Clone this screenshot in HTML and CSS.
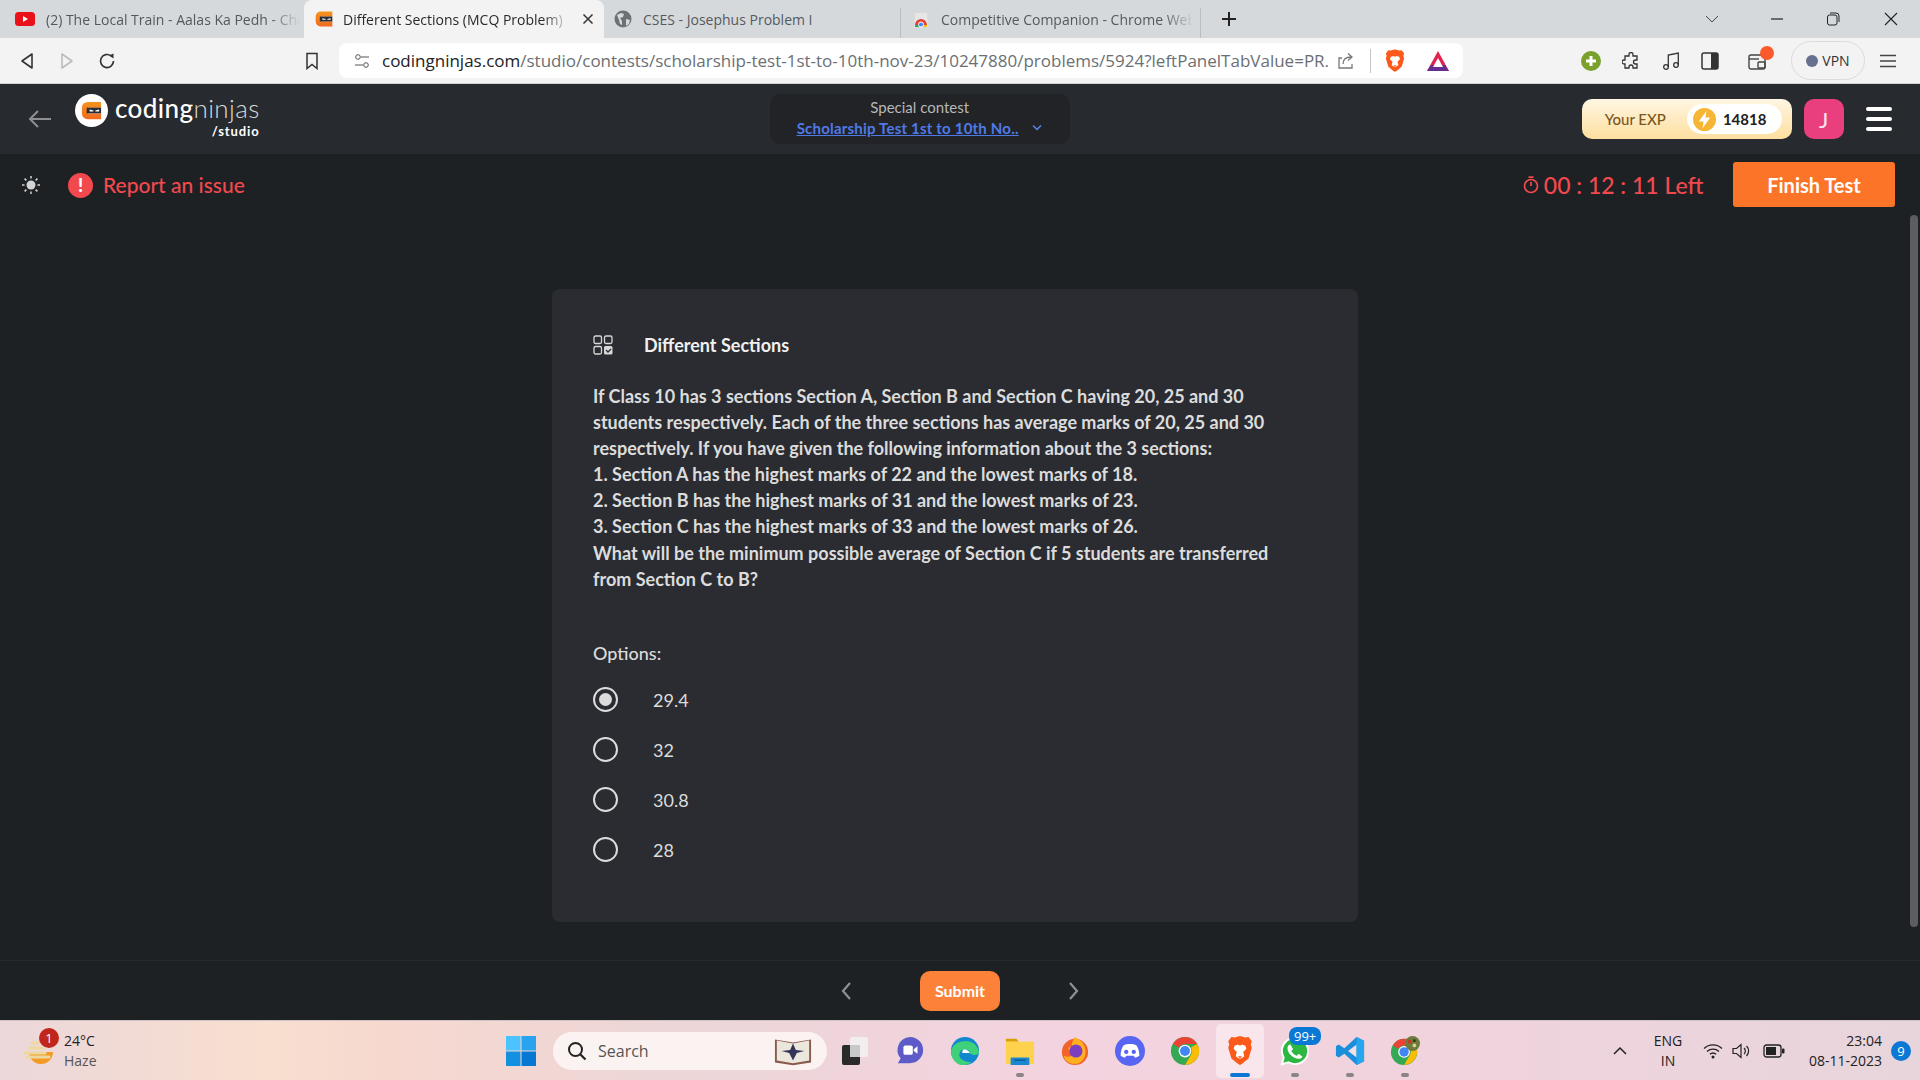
FILE: index.html
```html
<!DOCTYPE html>
<html lang="en">
<head>
    <meta charset="UTF-8">
    <title>Different Sections (MCQ Problem)</title>
    <link rel="stylesheet" href="styles.css">
</head>
<body>
    <svg class="sprite" width="0" height="0">
        <defs>
            <linearGradient id="cnOrange" x1="0" y1="0" x2="0" y2="1">
                <stop offset="0" stop-color="#f7941d"/>
                <stop offset="1" stop-color="#ef6a1f"/>
            </linearGradient>
            <symbol id="cnLogo" viewBox="0 0 24 24">
                <path d="M8 3h14v6H9a1.5 1.5 0 0 0-1.500 1.500v3A1.500 1.500 0 0 0 9 15h13v6H8a6 6 0 0 1-6-6V9a6 6 0 0 1 6-6z" fill="url(#cnOrange)"/>
                <rect x="7" y="9" width="15" height="6" fill="#2b2d33"/>
                <path d="M10 11l4 1v1h-4zM20 11l-4 1v1h4z" fill="#fff"/>
            </symbol>
            <symbol id="brave" viewBox="0 0 24 28">
                <path d="M12 0l5 1.500 3-.5 3 4-1 3 1 3-3 10-6 5-2 1-2-1-6-5-3-10 1-3-1-3 3-4 3 .5z" fill="#fb5a1b"/>
                <path d="M7 9l3-1 2 1 2-1 3 1 1 3-3 3 1 4-3 2h-2l-3-2 1-4-3-3z" fill="#fff"/>
                <path d="M10 19h4l-2 2z" fill="#fb5a1b"/>
            </symbol>
        </defs>
    </svg>

    <!-- browser tabs -->
    <div class="tab-strip">
        <div class="tab tab-first">
            <svg class="tab-icon" viewBox="0 0 20 14"><rect width="20" height="14" rx="3.500" fill="#e9101a"/><path d="M8 4l5 3-5 3z" fill="#fff"/></svg>
            <span class="tab-title">(2) The Local Train - Aalas Ka Pedh - Chaa</span>
        </div>
        <div class="tab tab-active">
            <svg class="tab-icon" viewBox="0 0 24 24"><use href="#cnLogo"/></svg>
            <span class="tab-title">Different Sections (MCQ Problem)</span>
            <svg class="tab-close" viewBox="0 0 12 12"><path d="M1.500 1.500l9 9M10.500 1.500l-9 9" stroke="#333" stroke-width="1.500" fill="none"/></svg>
        </div>
        <div class="tab tab-third">
            <svg class="tab-icon" viewBox="0 0 18 18"><circle cx="9" cy="9" r="8.500" fill="#6c7176"/><path d="M3 5l4-2 3 1-1 3-3 1 2 3v4l-2-1-1-4zM12 9l4 1-1 4-3 2z" fill="#d5d9dc"/></svg>
            <span class="tab-title">CSES - Josephus Problem I</span>
        </div>
        <div class="tab tab-fourth">
            <svg class="tab-icon" viewBox="0 0 18 18"><path d="M3 3h12l1 14H2z" fill="#e6e6e6"/><path d="M3 15a6 6 0 0 1 12 0z" fill="#e34133"/><path d="M3 15h6v2H3z" fill="#34a853"/><path d="M9 15h6v2H9z" fill="#fbbc05"/><circle cx="9" cy="14.500" r="2.500" fill="#4285f4" stroke="#fff"/></svg>
            <span class="tab-title">Competitive Companion - Chrome Web Store</span>
        </div>
        <svg class="new-tab" viewBox="0 0 16 16"><path d="M8 1v14M1 8h14" stroke="#222" stroke-width="2" fill="none"/></svg>
        <div class="window-controls">
            <svg viewBox="0 0 14 14" class="win-chevron"><path d="M1 4l6 6 6-6" stroke="#444" fill="none"/></svg>
            <svg viewBox="0 0 14 14" class="win-min"><path d="M1 7h12" stroke="#222" stroke-width="1.200" fill="none"/></svg>
            <svg viewBox="0 0 14 14" class="win-max"><rect x="1.500" y="3" width="9.500" height="10" rx="2" stroke="#222" fill="none"/><path d="M4 1h6a3 3 0 0 1 3 3v6" stroke="#222" fill="none"/></svg>
            <svg viewBox="0 0 14 14" class="win-x"><path d="M1 1l12 12M13 1L1 13" stroke="#222" stroke-width="1.100" fill="none"/></svg>
        </div>
    </div>

    <!-- browser toolbar -->
    <div class="toolbar">
        <svg class="nav-back" viewBox="0 0 14 18"><path d="M12 2v14L2 9z" stroke="#333" stroke-width="1.600" stroke-linejoin="round" fill="none"/></svg>
        <svg class="nav-forward" viewBox="0 0 14 18"><path d="M2 2v14L12 9z" stroke="#bbb" stroke-width="1.600" stroke-linejoin="round" fill="none"/></svg>
        <svg class="nav-reload" viewBox="0 0 18 18"><path d="M15.500 9A6.500 6.500 0 1 1 13 3.900" stroke="#333" stroke-width="1.700" fill="none"/><path d="M11 3.500l4.500-2v5z" fill="#333"/></svg>
        <svg class="nav-bookmark" viewBox="0 0 14 18"><path d="M2 1.500h10v15l-5-4-5 4z" stroke="#333" stroke-width="1.500" fill="none"/></svg>
        <div class="address-bar">
            <svg class="tune" viewBox="0 0 16 16"><circle cx="4" cy="4" r="2.300" stroke="#555" fill="none"/><path d="M7 4h8M1 12h8" stroke="#555" fill="none"/><circle cx="12" cy="12" r="2.300" stroke="#555" fill="none"/></svg>
            <span class="url"><span class="url-host">codingninjas.com</span>/studio/contests/scholarship-test-1st-to-10th-nov-23/10247880/problems/5924?leftPanelTabValue=PR...</span>
            <svg class="share" viewBox="0 0 18 18"><path d="M5 6H2v10h13v-4" stroke="#777" stroke-width="1.300" fill="none"/><path d="M6 12c0-5 3-7 8-7M11 1.500L15 5l-4 3.500" stroke="#777" stroke-width="1.300" fill="none"/></svg>
            <span class="addr-sep"></span>
            <svg class="addr-brave" viewBox="0 0 24 28"><use href="#brave"/></svg>
            <svg class="addr-bat" viewBox="0 0 24 22"><path d="M12 1l11 20H1z" fill="#e0234e"/><path d="M1 21h22l-4-6H5z" fill="#662d91"/><path d="M12 8l5 9H7z" fill="#fff"/></svg>
        </div>
        <svg class="ext-plus" viewBox="0 0 20 20"><circle cx="10" cy="10" r="10" fill="#7aa12b"/><path d="M10 5v10M5 10h10" stroke="#fff" stroke-width="3"/></svg>
        <svg class="ext-puzzle" viewBox="0 0 18 18"><path d="M7 2.500a2 2 0 0 1 4 0V4h4v4h-1.500a2 2 0 0 0 0 4H15v4h-4v-1a2 2 0 0 0-4 0v1H3v-4H2a2 2 0 0 1 0-4h1V4h4z" stroke="#333" stroke-width="1.300" fill="none"/></svg>
        <svg class="ext-music" viewBox="0 0 18 18"><circle cx="4" cy="15" r="2.300" stroke="#333" stroke-width="1.300" fill="none"/><circle cx="14" cy="13" r="2.300" stroke="#333" stroke-width="1.300" fill="none"/><path d="M6.300 15V3l10-2v12" stroke="#333" stroke-width="1.300" fill="none"/></svg>
        <svg class="ext-side" viewBox="0 0 18 18"><rect x="1" y="1" width="16" height="16" rx="2" stroke="#333" stroke-width="1.500" fill="none"/><rect x="10" y="1" width="7" height="16" fill="#333"/></svg>
        <div class="ext-wallet">
            <svg viewBox="0 0 20 18"><rect x="1" y="3" width="16" height="14" rx="2" stroke="#444" stroke-width="1.400" fill="none"/><path d="M1 7h10" stroke="#444" stroke-width="1.400"/><rect x="10" y="10" width="7" height="6" rx="1" stroke="#444" stroke-width="1.400" fill="none"/></svg>
            <span class="wallet-dot"></span>
        </div>
        <div class="vpn-pill"><span class="vpn-dot"></span>VPN</div>
        <svg class="browser-menu" viewBox="0 0 18 14"><path d="M1 1.500h16M1 7h16M1 12.500h16" stroke="#444" stroke-width="1.600"/></svg>
    </div>

    <!-- site header -->
    <header class="app-header">
        <svg class="back-arrow" viewBox="0 0 24 20"><path d="M23 10H2M10 2l-8 8 8 8" stroke="#8d8f92" stroke-width="2" fill="none"/></svg>
        <div class="brand">
            <div class="brand-mark"><svg viewBox="0 0 24 24"><use href="#cnLogo"/></svg></div>
            <div class="brand-text">
                <div class="brand-name"><span class="brand-bold">coding</span>ninjas</div>
                <div class="brand-sub">/studio</div>
            </div>
        </div>
        <div class="contest-box">
            <div class="contest-label">Special contest</div>
            <div class="contest-link"><a>Scholarship Test 1st to 10th No..</a>
                <svg viewBox="0 0 12 8"><path d="M2 1.500l4 4 4-4" stroke="#5d86ee" stroke-width="1.500" fill="none"/></svg>
            </div>
        </div>
        <div class="exp-pill">
            <span class="exp-label">Your EXP</span>
            <div class="exp-value">
                <svg viewBox="0 0 24 24"><circle cx="12" cy="12" r="12" fill="#f7b535"/><path d="M14 3L6 14h5l-1 7 8-11h-5z" fill="#fff"/></svg>
                <span>14818</span>
            </div>
        </div>
        <div class="avatar">J</div>
        <div class="hamburger"><span></span><span></span><span></span></div>
    </header>

    <div class="sub-header">
        <svg class="sun" viewBox="0 0 20 20"><circle cx="10" cy="10" r="4.500" fill="#d4d4d4"/><path d="M10 1v2.500M10 16.500V19M1 10h2.500M16.500 10H19M3.600 3.600l1.800 1.800M14.600 14.600l1.800 1.800M3.600 16.400l1.800-1.800M14.600 5.400l1.800-1.800" stroke="#d4d4d4" stroke-width="1.500"/></svg>
        <div class="report-icon">!</div>
        <span class="report-text">Report an issue</span>
        <svg class="timer-icon" viewBox="0 0 16 18"><circle cx="8" cy="10" r="6.500" stroke="#f2494e" stroke-width="1.700" fill="none"/><path d="M8 10V6M5.500 1.200h5" stroke="#f2494e" stroke-width="1.700"/></svg>
        <span class="timer-text">00 : 12 : 11 Left</span>
        <button class="finish-btn">Finish Test</button>
    </div>

    <!-- question -->
    <main class="main">
        <div class="question-card">
            <div class="question-head">
                <svg viewBox="0 0 20 20"><rect x="1" y="1" width="7.500" height="7.500" rx="1.500" stroke="#d8d8d8" stroke-width="1.300" fill="none"/><rect x="11.500" y="1" width="7.500" height="7.500" rx="1.500" stroke="#d8d8d8" stroke-width="1.300" fill="none"/><rect x="1" y="11.500" width="7.500" height="7.500" rx="1.500" stroke="#d8d8d8" stroke-width="1.300" fill="none"/><rect x="11" y="11" width="8.500" height="8.500" rx="1.500" fill="#d8d8d8"/><path d="M13 15l2 2 3-3" stroke="#2a2c31" stroke-width="1.300" fill="none"/></svg>
                <h2>Different Sections</h2>
            </div>
            <div class="question-text">
                <p>If Class 10 has 3 sections Section A, Section B and Section C having 20, 25 and 30</p>
                <p>students respectively. Each of the three sections has average marks of 20, 25 and 30</p>
                <p>respectively. If you have given the following information about the 3 sections:</p>
                <p>1. Section A has the highest marks of 22 and the lowest marks of 18.</p>
                <p>2. Section B has the highest marks of 31 and the lowest marks of 23.</p>
                <p>3. Section C has the highest marks of 33 and the lowest marks of 26.</p>
                <p>What will be the minimum possible average of Section C if 5 students are transferred</p>
                <p>from Section C to B?</p>
            </div>
            <div class="options-label">Options:</div>
            <div class="option"><span class="radio radio-on"></span><span>29.4</span></div>
            <div class="option"><span class="radio"></span><span>32</span></div>
            <div class="option"><span class="radio"></span><span>30.8</span></div>
            <div class="option"><span class="radio"></span><span>28</span></div>
        </div>
        <div class="scrollbar"></div>
    </main>

    <div class="submit-bar">
        <svg class="pager" viewBox="0 0 12 20"><path d="M10 2L3 10l7 8" stroke="#8a9198" stroke-width="2.200" fill="none"/></svg>
        <button class="submit-btn">Submit</button>
        <svg class="pager" viewBox="0 0 12 20"><path d="M2 2l7 8-7 8" stroke="#8a9198" stroke-width="2.200" fill="none"/></svg>
    </div>

    <!-- windows taskbar -->
    <footer class="taskbar">
        <div class="weather">
            <svg class="weather-icon" viewBox="0 0 30 30"><path d="M5 16h24a12 12 0 0 1-24 0z" fill="#f59a23"/><path d="M8 7h6M5 12h14M1 17h20M3 21h22" stroke="#ecd9a0" stroke-width="3" stroke-linecap="round"/></svg>
            <span class="weather-badge">1</span>
            <div class="weather-text"><div>24°C</div><div class="weather-sub">Haze</div></div>
        </div>
        <div class="task-center">
            <svg class="start" viewBox="0 0 30 30"><rect width="14.500" height="14.500" fill="#4cc2ff"/><rect x="15.500" width="14.500" height="14.500" fill="#29a3ee"/><rect y="15.500" width="14.500" height="14.500" fill="#1490e0"/><rect x="15.500" y="15.500" width="14.500" height="14.500" fill="#0678d4"/></svg>
            <div class="search-box">
                <svg viewBox="0 0 20 20"><circle cx="8.500" cy="8.500" r="6.500" stroke="#222" stroke-width="2" fill="none"/><path d="M13.500 13.500l5 5" stroke="#222" stroke-width="2.200"/></svg>
                <span>Search</span>
                <svg class="search-art" viewBox="0 0 40 30"><path d="M1 3l19 3 19-3v24l-19 3-19-3z" fill="#8a5b4c"/><path d="M3 4l17 3 17-3v21l-17 3-17-3z" fill="#ece7dc"/><path d="M20 7l3 7 9 1-8 2-4 8-4-8-8-2 9-1z" fill="#33335a"/></svg>
            </div>
            <div class="task-icon">
                <svg viewBox="0 0 26 30"><rect x="8" y="1" width="18" height="20" rx="2" fill="#f3f3f3" opacity=".8"/><rect y="9" width="18" height="20" rx="2" fill="#2a2a2a"/><rect x="8" y="9" width="10" height="12" fill="#c8c8c8"/></svg>
            </div>
            <div class="task-icon">
                <svg viewBox="0 0 30 32"><path d="M15 1a14 14 0 0 1 0 28H2l3-5a14 14 0 0 1 10-23z" fill="#5d5bc7"/><rect x="8" y="10" width="10" height="10" rx="2" fill="#fff"/><path d="M19 14l4-3v8l-4-3z" fill="#fff"/></svg>
            </div>
            <div class="task-icon">
                <svg viewBox="0 0 32 32"><circle cx="16" cy="16" r="15" fill="#1187d0"/><path d="M1 16C3 4 27-1 31 17c0 4-8 4-10 1 0-5-10-6-11 1-1 6 6 9 13 9-4 3-10 4-14 2C4 27 1 22 1 16z" fill="#3fd07a"/><path d="M10 19c0-7 9-6 11-1 2 3 10 3 10-1" fill="none"/><path d="M15 14c3 0 5 2 6 4h-8c0-2 1-4 2-4z" fill="#fff"/></svg>
            </div>
            <div class="task-icon task-open">
                <svg viewBox="0 0 32 30"><path d="M1 2h11l3 3H1z" fill="#d9a100"/><rect x="1" y="5" width="30" height="24" fill="#ffd24d"/><rect x="6" y="22" width="20" height="8" rx="1" fill="#1a87d0"/><rect x="10" y="24" width="12" height="1.500" fill="#0e5a96"/></svg>
            </div>
            <div class="task-icon">
                <svg viewBox="0 0 30 32"><circle cx="15" cy="17" r="14" fill="#f2632c"/><path d="M15 1c4 3 8 4 9 8 4 6 3 16-5 20-6 2-14 0-16-8 5 3 10 0 12-4-2-2-6-1-7-3 0-2 2-3 4-3-1-3 1-7 3-10z" fill="#ffb01f"/><circle cx="16" cy="16" r="7" fill="#7b3fc0"/></svg>
            </div>
            <div class="task-icon">
                <svg viewBox="0 0 32 32"><circle cx="16" cy="16" r="16" fill="#5865f2"/><path d="M9 10c4-2 10-2 14 0 2 3 3 7 3 11-2 1-3 2-5 2l-1-2H12l-1 2c-2 0-3-1-5-2 0-4 1-8 3-11z" fill="#fff"/><circle cx="12" cy="17" r="2.300" fill="#5865f2"/><circle cx="20" cy="17" r="2.300" fill="#5865f2"/></svg>
            </div>
            <div class="task-icon">
                <svg viewBox="0 0 32 32"><circle cx="16" cy="16" r="15" fill="#34a853"/><path d="M16 1a15 15 0 0 1 13 7.500H16a7.500 7.500 0 0 0-6.500 3.800L3 8.500A15 15 0 0 1 16 1z" fill="#ea4335"/><path d="M29 8.500A15 15 0 0 1 16 31l6.500-11.300A7.500 7.500 0 0 0 22.500 12z" fill="#fbbc05"/><circle cx="16" cy="16" r="6.800" fill="#fff"/><circle cx="16" cy="16" r="5.300" fill="#4285f4"/></svg>
            </div>
            <div class="task-icon task-active">
                <svg viewBox="0 0 24 28"><use href="#brave"/></svg>
            </div>
            <div class="task-icon task-open">
                <svg viewBox="0 0 32 32"><path d="M16 2a14 14 0 0 1 0 28c-3 0-5-1-7-2l-7 2 2-7C3 21 2 18 2 16A14 14 0 0 1 16 2z" fill="#2bb741" stroke="#fff" stroke-width="2"/><path d="M11 9l3 5-2 2c2 3 3 4 6 5l2-2 4 3c-2 3-5 3-9 1-5-3-7-7-7-10 0-2 1-4 3-4z" fill="#fff"/></svg>
                <span class="wa-badge">99+</span>
            </div>
            <div class="task-icon task-open">
                <svg viewBox="0 0 32 32"><path d="M23 1l8 4v22l-8 4-13-12-6 4-3-2V11l3-2 6 4z" fill="#1b8fdc"/><path d="M23 9l-9 7 9 7z" fill="#f5dfe3"/><path d="M23 1l8 4v22l-8 4z" fill="#25a6ee"/></svg>
            </div>
            <div class="task-icon task-open">
                <svg viewBox="0 0 32 32"><circle cx="15" cy="17" r="14" fill="#34a853"/><path d="M15 3a14 14 0 0 1 12 7H15a7 7 0 0 0-6 3.500L3 10A14 14 0 0 1 15 3z" fill="#ea4335"/><path d="M27 10a14 14 0 0 1-12 21l6-10.500A7 7 0 0 0 21 13z" fill="#fbbc05"/><circle cx="15" cy="17" r="6.300" fill="#fff"/><circle cx="15" cy="17" r="5" fill="#4285f4"/><circle cx="24" cy="8" r="8" fill="#6c7a3e"/><circle cx="21" cy="6" r="2" fill="#c33b1f"/><circle cx="26" cy="10" r="2" fill="#d9d27a"/><circle cx="26" cy="5" r="1.500" fill="#2d3318"/></svg>
            </div>
        </div>
        <div class="tray">
            <svg class="tray-chevron" viewBox="0 0 14 9"><path d="M1 8l6-6 6 6" stroke="#222" stroke-width="1.500" fill="none"/></svg>
            <div class="tray-lang"><div>ENG</div><div>IN</div></div>
            <svg class="tray-wifi" viewBox="0 0 20 16"><path d="M1 5.500a13 13 0 0 1 18 0M4 8.500a9 9 0 0 1 12 0M6.800 11.300a5 5 0 0 1 6.400 0" stroke="#222" stroke-width="1.300" fill="none"/><circle cx="10" cy="14" r="1.500" fill="#222"/></svg>
            <svg class="tray-vol" viewBox="0 0 20 16"><path d="M1 5.500h3.500L9 1.500v13l-4.500-4H1z" stroke="#222" stroke-width="1.200" fill="none"/><path d="M12 5a4 4 0 0 1 0 6M14.500 3a7 7 0 0 1 0 10" stroke="#222" stroke-width="1.200" fill="none"/></svg>
            <svg class="tray-batt" viewBox="0 0 22 14"><rect x="1" y="1" width="17" height="12" rx="2.500" stroke="#222" stroke-width="1.300" fill="none"/><rect x="3" y="3" width="10" height="8" fill="#222"/><rect x="19" y="4.500" width="2.500" height="5" rx="1" fill="#222"/></svg>
            <div class="tray-clock"><div>23:04</div><div>08-11-2023</div></div>
            <span class="tray-badge">9</span>
        </div>
    </footer>
</body>
</html>
```
FILE: styles.css
```css
* {
    box-sizing: border-box;
}
html, body {
    margin: 0;
    height: 1080px;
    overflow: hidden;
}
body {
    font-family: "Open Sans", "Noto Sans", sans-serif;
    background-color: #1e2124;
    display: flex;
    flex-direction: column;
}
svg {
    display: block;
    flex-shrink: 0;
}
.sprite {
    position: absolute;
}

/* tabs */
.tab-strip {
    height: 38px;
    display: flex;
    align-items: stretch;
    background-color: #d5d9dc;
    font-size: 14px;
    color: #55595d;
}
.tab {
    display: flex;
    align-items: center;
    overflow: hidden;
    white-space: nowrap;
}
.tab-title {
    overflow: hidden;
    flex: 1;
    -webkit-mask-image: linear-gradient(to right, #000 88%, transparent);
    mask-image: linear-gradient(to right, #000 88%, transparent);
}
.tab-icon {
    width: 20px;
    height: 20px;
    margin-right: 11px;
}
.tab-first {
    width: 304px;
    padding: 0 4px 0 15px;
}
.tab-active {
    width: 300px;
    background-color: #f3f3f3;
    color: #2a2a2a;
    border-radius: 8px 8px 0 0;
    padding: 0 10px;
}
.tab-active .tab-icon {
    margin-right: 9px;
}
.tab-close {
    width: 12px;
    height: 12px;
    margin-left: 12px;
}
.tab-third {
    width: 297px;
    padding: 0 10px 0 10px;
    border-right: 1px solid #b9bdc0;
    margin-top: 8px;
    padding-bottom: 8px;
}
.tab-fourth {
    width: 300px;
    padding: 0 6px 0 11px;
    border-right: 1px solid #b9bdc0;
    margin-top: 8px;
    padding-bottom: 8px;
}
.tab-third .tab-title {
    -webkit-mask-image: none;
    mask-image: none;
}
.tab-third .tab-icon {
    width: 18px;
    height: 18px;
}
.tab-fourth .tab-icon {
    width: 18px;
    height: 18px;
}
.new-tab {
    width: 16px;
    height: 16px;
    margin: 11px 0 0 20px;
}
.window-controls {
    margin-left: auto;
    display: flex;
    align-items: center;
    padding-right: 22px;
}
.window-controls svg {
    width: 14px;
    height: 14px;
}
.win-chevron {
    margin-right: 51px;
}
.win-min {
    margin-right: 42px;
}
.win-max {
    margin-right: 44px;
}

/* toolbar */
.toolbar {
    height: 46px;
    display: flex;
    align-items: center;
    background-color: #f3f3f3;
    border-bottom: 1px solid #d0d2d4;
    padding-left: 20px;
}
.nav-back, .nav-forward {
    width: 14px;
    height: 18px;
}
.nav-forward {
    margin-left: 26px;
}
.nav-reload {
    width: 18px;
    height: 18px;
    margin-left: 24px;
}
.nav-bookmark {
    width: 14px;
    height: 18px;
    margin-left: 189px;
}
.address-bar {
    width: 1124px;
    height: 35px;
    margin-left: 20px;
    background: white;
    border-radius: 8px;
    display: flex;
    align-items: center;
    padding-left: 15px;
}
.tune {
    width: 16px;
    height: 16px;
}
.url {
    margin-left: 12px;
    width: 948px;
    font-size: 17px;
    color: #6b6f74;
    white-space: nowrap;
    overflow: hidden;
}
.url-host {
    color: #222;
}
.share {
    width: 18px;
    height: 18px;
    margin-left: 7px;
}
.addr-sep {
    width: 1px;
    height: 24px;
    background-color: #c5c5c5;
    margin-left: 15px;
}
.addr-brave {
    width: 20px;
    height: 24px;
    margin-left: 14px;
}
.addr-bat {
    width: 24px;
    height: 22px;
    margin-left: 21px;
}
.ext-plus {
    width: 20px;
    height: 20px;
    margin-left: 118px;
}
.ext-puzzle {
    width: 18px;
    height: 18px;
    margin-left: 21px;
}
.ext-music {
    width: 18px;
    height: 18px;
    margin-left: 22px;
}
.ext-side {
    width: 18px;
    height: 18px;
    margin-left: 21px;
}
.ext-wallet {
    position: relative;
    margin-left: 29px;
}
.ext-wallet svg {
    width: 20px;
    height: 18px;
}
.wallet-dot {
    position: absolute;
    left: 12px;
    top: -6px;
    width: 14px;
    height: 14px;
    border-radius: 50%;
    background-color: #fb5a2b;
}
.vpn-pill {
    width: 74px;
    height: 39px;
    margin-left: 23px;
    border: 1px solid #dcdcdc;
    border-radius: 20px;
    display: flex;
    align-items: center;
    justify-content: center;
    font-size: 14px;
    color: #333;
}
.vpn-dot {
    width: 12px;
    height: 12px;
    border-radius: 50%;
    background-color: #67708f;
    margin-right: 4px;
}
.browser-menu {
    width: 18px;
    height: 14px;
    margin-left: 14px;
}

/* site header */
.app-header {
    height: 70px;
    display: flex;
    align-items: center;
    background-color: #272a2f;
    padding-left: 28px;
    font-family: Lato, "Noto Sans", sans-serif;
}
.back-arrow {
    width: 24px;
    height: 20px;
}
.brand {
    display: flex;
    margin-left: 23px;
    align-self: flex-start;
    margin-top: 10px;
}
.brand-mark {
    width: 33px;
    height: 33px;
    border-radius: 50%;
    background: white;
    display: flex;
    align-items: center;
    justify-content: center;
}
.brand-mark svg {
    width: 23px;
    height: 23px;
}
.brand-text {
    margin-left: 7px;
    color: white;
}
.brand-name {
    font-size: 26px;
    line-height: 28px;
    font-weight: 300;
    color: #d8d8d8;
    letter-spacing: .4px;
}
.brand-bold {
    font-weight: 500;
    color: white;
}
.brand-sub {
    text-align: right;
    font-size: 13px;
    font-weight: 700;
    letter-spacing: .9px;
    line-height: 15px;
    margin-top: 2px;
}
.contest-box {
    width: 300px;
    height: 50px;
    margin-left: 510px;
    background-color: #212327;
    border-radius: 10px;
    text-align: center;
    font-size: 15px;
    padding-top: 4px;
    color: #b7b7b7;
}
.contest-label {
    line-height: 19px;
}
.contest-link {
    display: flex;
    justify-content: center;
    align-items: center;
    line-height: 22px;
    font-weight: 700;
    color: #4f7ae6;
}
.contest-link a {
    text-decoration: underline;
    letter-spacing: .2px;
}
.contest-link svg {
    width: 12px;
    height: 8px;
    margin-left: 12px;
}
.exp-pill {
    width: 210px;
    height: 40px;
    margin-left: 512px;
    border-radius: 10px;
    background: linear-gradient(180deg, #fff6e3, #fedf9f);
    display: flex;
    align-items: center;
    padding-left: 23px;
    font-size: 15px;
    color: #7a571d;
}
.exp-label {
    font-weight: 500;
}
.exp-value {
    width: 95px;
    height: 30px;
    margin-left: 21px;
    background: white;
    border-radius: 15px;
    display: flex;
    align-items: center;
    padding-left: 6px;
    color: #222;
    font-weight: 700;
}
.exp-value svg {
    width: 23px;
    height: 23px;
    margin-right: 7px;
}
.avatar {
    width: 40px;
    height: 40px;
    margin-left: 12px;
    border-radius: 10px;
    background-color: #ea3f7e;
    color: #ffe3ec;
    font-size: 22px;
    display: flex;
    align-items: center;
    justify-content: center;
}
.hamburger {
    width: 26px;
    margin-left: 22px;
    display: flex;
    flex-direction: column;
    gap: 6px;
}
.hamburger span {
    height: 4px;
    background: white;
    border-radius: 2px;
}

.sub-header {
    height: 66px;
    display: flex;
    align-items: center;
    padding: 0 25px 0 21px;
    background-color: #1e2124;
    font-family: Lato, "Noto Sans", sans-serif;
    color: #f2494e;
    font-size: 21px;
    font-weight: 500;
    align-items: flex-start;
}
.sun {
    width: 20px;
    height: 20px;
    margin-top: 21px;
}
.report-icon {
    width: 25px;
    height: 25px;
    border-radius: 50%;
    margin: 19px 0 0 27px;
    background-color: #f2494e;
    color: white;
    font-weight: 900;
    font-size: 18px;
    text-align: center;
    line-height: 25px;
}
.report-text {
    margin: 17px 0 0 10px;
    line-height: 28px;
}
.timer-icon {
    width: 16px;
    height: 18px;
    margin: 22px 0 0 1278px;
}
.timer-text {
    margin: 17px 0 0 5px;
    line-height: 28px;
    font-size: 23px;
    font-weight: 500;
}
.finish-btn {
    width: 162px;
    height: 45px;
    margin: 8px 0 0 auto;
    background-color: #fc7428;
    color: white;
    border: none;
    border-radius: 3px;
    font-family: Lato, "Noto Sans", sans-serif;
    font-size: 20px;
    font-weight: 700;
}

/* question */
.main {
    height: 740px;
    position: relative;
    padding: 69px 0 0 552px;
    background-color: #1e2124;
    font-family: Lato, "Noto Sans", sans-serif;
    color: #dcdcdc;
}
.question-card {
    width: 806px;
    height: 633px;
    background-color: #2a2c31;
    border-radius: 8px;
    padding: 40px 41px;
}
.question-head {
    display: flex;
    align-items: center;
    height: 32px;
}
.question-head svg {
    width: 20px;
    height: 20px;
}
.question-head h2 {
    margin: 0 0 0 31px;
    font-size: 18px;
    font-weight: 700;
    color: #f0f0f0;
}
.question-text {
    margin-top: 22px;
    font-size: 18px;
    font-weight: 700;
    line-height: 26.100px;
}
.question-text p {
    margin: 0;
    white-space: nowrap;
}
.options-label {
    margin-top: 49px;
    font-size: 18px;
    font-weight: 500;
    line-height: 24px;
}
.option {
    height: 50px;
    display: flex;
    align-items: center;
    font-size: 18px;
}
.options-label + .option {
    margin-top: 10px;
}
.radio {
    width: 25px;
    height: 25px;
    border: 2px solid #dcdcdc;
    border-radius: 50%;
    margin-right: 35px;
    position: relative;
}
.radio-on::after {
    content: "";
    position: absolute;
    left: 4px;
    top: 4px;
    width: 13px;
    height: 13px;
    border-radius: 50%;
    background-color: #dcdcdc;
}
.scrollbar {
    position: absolute;
    right: 2px;
    top: -5px;
    width: 8px;
    height: 712px;
    border-radius: 4px;
    background-color: #5b5d60;
}
.submit-bar {
    height: 60px;
    display: flex;
    align-items: center;
    background-color: #1e2124;
    border-top: 1px solid #25282c;
    padding-left: 840px;
}
.pager {
    width: 12px;
    height: 20px;
}
.submit-btn {
    width: 80px;
    height: 40px;
    margin: 0 68px;
    background-color: #fd8239;
    color: white;
    border: none;
    border-radius: 10px;
    font-family: Lato, "Noto Sans", sans-serif;
    font-size: 16px;
    font-weight: 700;
}

/* taskbar */
.taskbar {
    height: 60px;
    display: flex;
    align-items: center;
    background: linear-gradient(90deg, #ecd7da 0%, #f8dfcf 14%, #f6d8cf 20%, #ecd6d8 36%, #f3d3df 55%, #f0d3dd 75%, #e8d5dc 100%);
    border-top: 1px solid #cfc3c3;
    font-size: 14px;
    color: #222;
}
.weather {
    width: 506px;
    position: relative;
    display: flex;
    align-items: center;
    padding-left: 24px;
}
.weather-icon {
    width: 30px;
    height: 30px;
}
.weather-badge {
    position: absolute;
    left: 39px;
    top: -3px;
    width: 20px;
    height: 20px;
    border-radius: 50%;
    background-color: #c1261c;
    color: white;
    font-size: 13px;
    text-align: center;
    line-height: 20px;
}
.weather-text {
    margin-left: 10px;
    line-height: 20px;
}
.weather-sub {
    color: #555;
}
.task-center {
    display: flex;
    align-items: center;
}
.start {
    width: 30px;
    height: 30px;
}
.search-box {
    width: 274px;
    height: 38px;
    margin-left: 17px;
    background-color: #fbf3f1;
    border-radius: 19px;
    display: flex;
    align-items: center;
    padding-left: 14px;
    font-size: 16px;
    color: #555;
}
.search-box svg {
    width: 20px;
    height: 20px;
}
.search-box span {
    margin-left: 11px;
}
.search-box .search-art {
    width: 38px;
    height: 30px;
    margin-left: auto;
    margin-right: 15px;
}
.task-icon {
    width: 48px;
    height: 54px;
    margin-right: 7px;
    display: flex;
    align-items: center;
    justify-content: center;
    position: relative;
}
.search-box + .task-icon {
    margin-left: 4px;
}
.task-icon svg {
    width: 30px;
    height: 30px;
}
.task-open::after, .task-active::after {
    content: "";
    position: absolute;
    bottom: 1px;
    left: 50%;
    width: 8px;
    height: 4px;
    margin-left: -4px;
    border-radius: 2px;
    background-color: #8a8588;
}
.task-active {
    background-color: #f8e6ec;
    border-radius: 5px;
}
.task-active::after {
    width: 20px;
    margin-left: -10px;
    background-color: #0a78d4;
}
.wa-badge {
    position: absolute;
    left: 18px;
    top: 3px;
    padding: 0 5px;
    height: 18px;
    border-radius: 8px;
    background-color: #0a78d4;
    color: white;
    font-size: 13px;
    line-height: 18px;
}
.tray {
    margin-left: auto;
    display: flex;
    align-items: center;
    padding-right: 9px;
}
.tray-chevron {
    width: 14px;
    height: 9px;
}
.tray-lang {
    width: 40px;
    margin-left: 21px;
    text-align: center;
    line-height: 20px;
}
.tray-wifi {
    width: 20px;
    height: 16px;
    margin-left: 15px;
}
.tray-vol {
    width: 20px;
    height: 16px;
    margin-left: 9px;
}
.tray-batt {
    width: 22px;
    height: 14px;
    margin-left: 11px;
}
.tray-clock {
    width: 85px;
    margin-left: 12px;
    text-align: right;
    line-height: 20px;
}
.tray-badge {
    width: 20px;
    height: 20px;
    margin-left: 9px;
    border-radius: 50%;
    background-color: #0a78d4;
    color: white;
    font-size: 13px;
    text-align: center;
    line-height: 20px;
}
```
